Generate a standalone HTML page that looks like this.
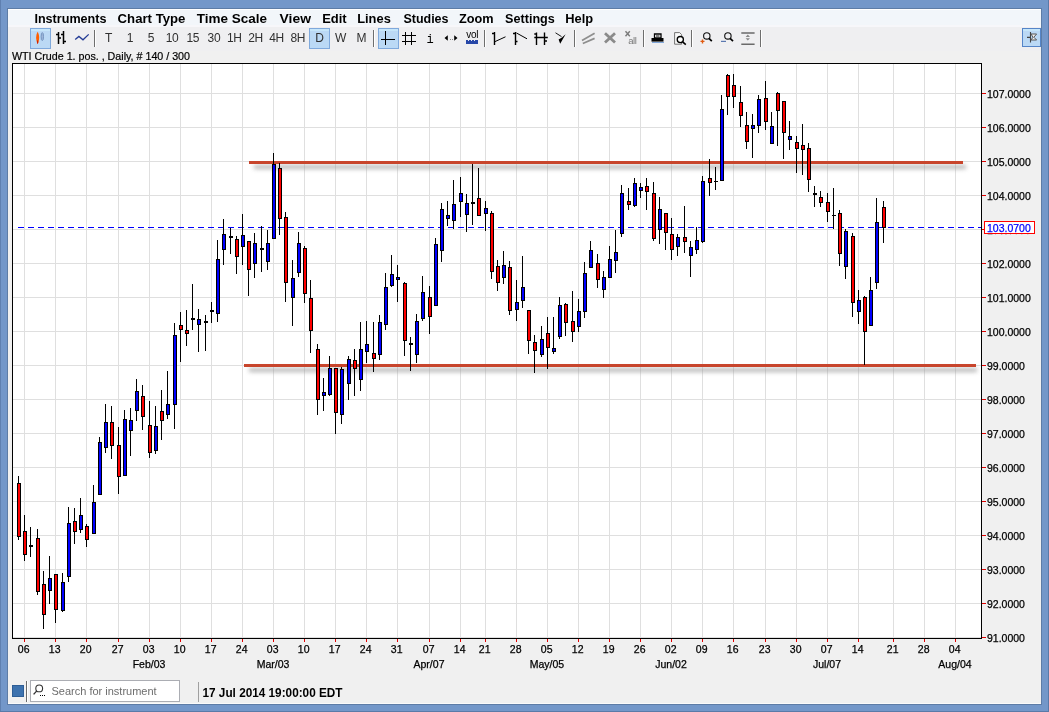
<!DOCTYPE html>
<html><head><meta charset="utf-8"><style>
html,body{margin:0;padding:0;width:1049px;height:712px;overflow:hidden;background:#7397C9;}
svg{position:absolute;left:0;top:0;display:block;will-change:transform;}
</style></head><body>
<svg width="1049" height="712" viewBox="0 0 1049 712" shape-rendering="crispEdges">
<rect x="0" y="0" width="1049" height="712" fill="#7397C9"/>
<rect x="0" y="0" width="1" height="712" fill="#5F80B0"/><rect x="1048" y="0" width="1" height="712" fill="#5A7AA8"/><rect x="0" y="711" width="1049" height="1" fill="#5A7AA8"/>
<rect x="7" y="8" width="1035" height="697" fill="#5D7CA6"/>
<rect x="8" y="9" width="1033" height="695" fill="#F0F0F0"/>
<rect x="8" y="703" width="1033" height="1" fill="#FAFAFA"/>
<rect x="8" y="9" width="1033" height="1" fill="#FFFFFF"/>
<rect x="8" y="10" width="1033" height="15" fill="#F2F6FA"/>
<rect x="8" y="25" width="1033" height="2" fill="#F7F7FA"/>
<rect x="8" y="27" width="1033" height="24" fill="#EFEFF1"/>
<rect x="12" y="63" width="969" height="575" fill="#FFFFFF"/>
<path d="M13 93.5H981M13 127.5H981M13 161.5H981M13 195.5H981M13 229.5H981M13 263.5H981M13 297.5H981M13 331.5H981M13 365.5H981M13 399.5H981M13 433.5H981M13 467.5H981M13 501.5H981M13 535.5H981M13 569.5H981M13 603.5H981M13 637.5H981M24.5 64V638M55.5 64V638M86.5 64V638M118.5 64V638M149.5 64V638M180.5 64V638M211.5 64V638M242.5 64V638M273.5 64V638M304.5 64V638M335.5 64V638M366.5 64V638M397.5 64V638M429.5 64V638M460.5 64V638M485.5 64V638M516.5 64V638M547.5 64V638M578.5 64V638M609.5 64V638M640.5 64V638M671.5 64V638M702.5 64V638M733.5 64V638M765.5 64V638M796.5 64V638M827.5 64V638M858.5 64V638M893.5 64V638M924.5 64V638M955.5 64V638" stroke="#DFDFDF" stroke-width="1" fill="none"/>
<defs><filter id="sh" x="-5%" y="-200%" width="110%" height="500%"><feGaussianBlur stdDeviation="2"/></filter></defs>
<rect x="254" y="165" width="712" height="4" fill="#9A9A9A" opacity="0.7" filter="url(#sh)"/>
<rect x="249" y="161" width="714" height="3" fill="#C8452C"/>
<rect x="249" y="368" width="728" height="4" fill="#9A9A9A" opacity="0.7" filter="url(#sh)"/>
<rect x="244" y="364" width="732" height="3" fill="#C8452C"/>
<path d="M18 227.5H981" stroke="#0000FF" stroke-width="1" stroke-dasharray="6 4" fill="none"/>
<path d="M18.5 476V540M24.5 515V561M30.5 527V557M37.5 529V595M43.5 571V629M49.5 556V604M55.5 574V623M62.5 573V612M68.5 507V582M74.5 508V544M80.5 498V533M86.5 524V547M93.5 485V534M99.5 437V495M105.5 404V453M111.5 406V459M118.5 427V494M124.5 410V476M130.5 408V456M136.5 379V421M142.5 385V430M149.5 401V458M155.5 406V454M161.5 390V440M167.5 371V419M174.5 323V429M180.5 312V362M186.5 310V346M192.5 284V330M198.5 309V352M205.5 315V351M211.5 302V323M217.5 240V322M223.5 219V265M230.5 228V254M236.5 236V274M242.5 214V265M248.5 241V296M254.5 233V278M261.5 226V272M267.5 230V270M273.5 153V239M279.5 163V235M285.5 212V302M292.5 260V326M298.5 232V277M304.5 246V303M310.5 280V353M317.5 344V415M323.5 378V411M329.5 356V396M335.5 368V434M341.5 367V424M348.5 356V400M354.5 349V396M360.5 322V391M366.5 321V363M373.5 322V372M379.5 315V360M385.5 273V330M391.5 255V287M397.5 265V302M404.5 282V356M410.5 337V371M416.5 314V363M422.5 276V321M429.5 286V334M435.5 238V306M441.5 203V262M447.5 201V226M453.5 180V229M460.5 177V217M466.5 194V232M472.5 164V225M478.5 168V216M485.5 201V231M491.5 211V279M497.5 260V291M503.5 251V284M509.5 261V315M516.5 280V321M522.5 256V308M528.5 310V354M534.5 335V373M541.5 326V357M547.5 317V369M553.5 317V354M559.5 297V339M565.5 303V336M572.5 291V342M578.5 299V332M584.5 262V318M590.5 241V268M597.5 254V288M603.5 271V298M609.5 246V278M615.5 230V273M621.5 185V237M628.5 188V210M634.5 178V207M640.5 183V198M646.5 178V210M653.5 182V241M659.5 197V244M665.5 213V250M671.5 218V260M677.5 234V256M684.5 206V253M690.5 241V277M696.5 227V254M702.5 176V243M709.5 159V196M715.5 167V190M721.5 95V181M727.5 74V115M733.5 74V108M740.5 86V127M746.5 112V149M752.5 114V158M758.5 95V133M765.5 81V130M771.5 112V144M777.5 92V146M783.5 101V159M789.5 121V150M796.5 136V173M802.5 124V175M808.5 143V192M814.5 186V207M820.5 191V207M827.5 193V222M833.5 188V229M839.5 210V266M845.5 229V279M852.5 233V317M858.5 290V324M864.5 296V365M870.5 277V326M876.5 198V289M883.5 201V243" stroke="#000" stroke-width="1" fill="none"/>
<rect x="17" y="483" width="4" height="54" fill="#000"/><rect x="18" y="484" width="2" height="52" fill="#FF0000"/><rect x="23" y="531" width="4" height="24" fill="#000"/><rect x="24" y="532" width="2" height="22" fill="#FF0000"/><rect x="29" y="545" width="4" height="2" fill="#000"/><rect x="36" y="538" width="4" height="54" fill="#000"/><rect x="37" y="539" width="2" height="52" fill="#FF0000"/><rect x="42" y="584" width="4" height="31" fill="#000"/><rect x="43" y="585" width="2" height="29" fill="#FF0000"/><rect x="48" y="578" width="4" height="13" fill="#000"/><rect x="49" y="579" width="2" height="11" fill="#0000FF"/><rect x="54" y="574" width="4" height="36" fill="#000"/><rect x="55" y="575" width="2" height="34" fill="#FF0000"/><rect x="61" y="582" width="4" height="29" fill="#000"/><rect x="62" y="583" width="2" height="27" fill="#0000FF"/><rect x="67" y="523" width="4" height="54" fill="#000"/><rect x="68" y="524" width="2" height="52" fill="#0000FF"/><rect x="73" y="521" width="4" height="11" fill="#000"/><rect x="74" y="522" width="2" height="9" fill="#FF0000"/><rect x="79" y="515" width="4" height="15" fill="#000"/><rect x="80" y="516" width="2" height="13" fill="#0000FF"/><rect x="85" y="526" width="4" height="14" fill="#000"/><rect x="86" y="527" width="2" height="12" fill="#FF0000"/><rect x="92" y="502" width="4" height="32" fill="#000"/><rect x="93" y="503" width="2" height="30" fill="#0000FF"/><rect x="98" y="442" width="4" height="53" fill="#000"/><rect x="99" y="443" width="2" height="51" fill="#0000FF"/><rect x="104" y="422" width="4" height="26" fill="#000"/><rect x="105" y="423" width="2" height="24" fill="#0000FF"/><rect x="110" y="422" width="4" height="24" fill="#000"/><rect x="111" y="423" width="2" height="22" fill="#FF0000"/><rect x="117" y="445" width="4" height="32" fill="#000"/><rect x="118" y="446" width="2" height="30" fill="#FF0000"/><rect x="123" y="419" width="4" height="57" fill="#000"/><rect x="124" y="420" width="2" height="55" fill="#0000FF"/><rect x="129" y="420" width="4" height="11" fill="#000"/><rect x="130" y="421" width="2" height="9" fill="#0000FF"/><rect x="135" y="391" width="4" height="20" fill="#000"/><rect x="136" y="392" width="2" height="18" fill="#0000FF"/><rect x="141" y="396" width="4" height="21" fill="#000"/><rect x="142" y="397" width="2" height="19" fill="#FF0000"/><rect x="148" y="425" width="4" height="28" fill="#000"/><rect x="149" y="426" width="2" height="26" fill="#FF0000"/><rect x="154" y="426" width="4" height="25" fill="#000"/><rect x="155" y="427" width="2" height="23" fill="#0000FF"/><rect x="160" y="411" width="4" height="10" fill="#000"/><rect x="161" y="412" width="2" height="8" fill="#FF0000"/><rect x="166" y="404" width="4" height="11" fill="#000"/><rect x="167" y="405" width="2" height="9" fill="#0000FF"/><rect x="173" y="335" width="4" height="70" fill="#000"/><rect x="174" y="336" width="2" height="68" fill="#0000FF"/><rect x="179" y="325" width="4" height="5" fill="#000"/><rect x="180" y="326" width="2" height="3" fill="#FF0000"/><rect x="185" y="330" width="4" height="4" fill="#000"/><rect x="186" y="331" width="2" height="2" fill="#FF0000"/><rect x="191" y="318" width="4" height="2" fill="#000"/><rect x="197" y="319" width="4" height="6" fill="#000"/><rect x="198" y="320" width="2" height="4" fill="#0000FF"/><rect x="204" y="321" width="4" height="2" fill="#000"/><rect x="210" y="310" width="4" height="2" fill="#000"/><rect x="216" y="259" width="4" height="55" fill="#000"/><rect x="217" y="260" width="2" height="53" fill="#0000FF"/><rect x="222" y="234" width="4" height="16" fill="#000"/><rect x="223" y="235" width="2" height="14" fill="#0000FF"/><rect x="229" y="236" width="4" height="2" fill="#000"/><rect x="235" y="239" width="4" height="18" fill="#000"/><rect x="236" y="240" width="2" height="16" fill="#FF0000"/><rect x="241" y="235" width="4" height="12" fill="#000"/><rect x="242" y="236" width="2" height="10" fill="#0000FF"/><rect x="247" y="241" width="4" height="29" fill="#000"/><rect x="248" y="242" width="2" height="27" fill="#FF0000"/><rect x="253" y="243" width="4" height="21" fill="#000"/><rect x="254" y="244" width="2" height="19" fill="#0000FF"/><rect x="260" y="248" width="4" height="2" fill="#000"/><rect x="266" y="243" width="4" height="19" fill="#000"/><rect x="267" y="244" width="2" height="17" fill="#0000FF"/><rect x="272" y="164" width="4" height="75" fill="#000"/><rect x="273" y="165" width="2" height="73" fill="#0000FF"/><rect x="278" y="168" width="4" height="51" fill="#000"/><rect x="279" y="169" width="2" height="49" fill="#FF0000"/><rect x="284" y="217" width="4" height="66" fill="#000"/><rect x="285" y="218" width="2" height="64" fill="#FF0000"/><rect x="291" y="278" width="4" height="20" fill="#000"/><rect x="292" y="279" width="2" height="18" fill="#0000FF"/><rect x="297" y="243" width="4" height="30" fill="#000"/><rect x="298" y="244" width="2" height="28" fill="#0000FF"/><rect x="303" y="248" width="4" height="46" fill="#000"/><rect x="304" y="249" width="2" height="44" fill="#FF0000"/><rect x="309" y="298" width="4" height="33" fill="#000"/><rect x="310" y="299" width="2" height="31" fill="#FF0000"/><rect x="316" y="349" width="4" height="51" fill="#000"/><rect x="317" y="350" width="2" height="49" fill="#FF0000"/><rect x="322" y="392" width="4" height="4" fill="#000"/><rect x="323" y="393" width="2" height="2" fill="#0000FF"/><rect x="328" y="368" width="4" height="27" fill="#000"/><rect x="329" y="369" width="2" height="25" fill="#0000FF"/><rect x="334" y="368" width="4" height="45" fill="#000"/><rect x="335" y="369" width="2" height="43" fill="#FF0000"/><rect x="340" y="369" width="4" height="46" fill="#000"/><rect x="341" y="370" width="2" height="44" fill="#0000FF"/><rect x="347" y="359" width="4" height="25" fill="#000"/><rect x="348" y="360" width="2" height="23" fill="#0000FF"/><rect x="353" y="360" width="4" height="9" fill="#000"/><rect x="354" y="361" width="2" height="7" fill="#FF0000"/><rect x="359" y="349" width="4" height="31" fill="#000"/><rect x="360" y="350" width="2" height="29" fill="#0000FF"/><rect x="365" y="344" width="4" height="8" fill="#000"/><rect x="366" y="345" width="2" height="6" fill="#0000FF"/><rect x="372" y="353" width="4" height="6" fill="#000"/><rect x="373" y="354" width="2" height="4" fill="#FF0000"/><rect x="378" y="322" width="4" height="33" fill="#000"/><rect x="379" y="323" width="2" height="31" fill="#0000FF"/><rect x="384" y="287" width="4" height="38" fill="#000"/><rect x="385" y="288" width="2" height="36" fill="#0000FF"/><rect x="390" y="274" width="4" height="12" fill="#000"/><rect x="391" y="275" width="2" height="10" fill="#0000FF"/><rect x="396" y="277" width="4" height="3" fill="#000"/><rect x="397" y="278" width="2" height="1" fill="#0000FF"/><rect x="403" y="283" width="4" height="58" fill="#000"/><rect x="404" y="284" width="2" height="56" fill="#FF0000"/><rect x="409" y="343" width="4" height="2" fill="#000"/><rect x="415" y="321" width="4" height="34" fill="#000"/><rect x="416" y="322" width="2" height="32" fill="#0000FF"/><rect x="421" y="292" width="4" height="27" fill="#000"/><rect x="422" y="293" width="2" height="25" fill="#0000FF"/><rect x="428" y="297" width="4" height="20" fill="#000"/><rect x="429" y="298" width="2" height="18" fill="#FF0000"/><rect x="434" y="244" width="4" height="62" fill="#000"/><rect x="435" y="245" width="2" height="60" fill="#0000FF"/><rect x="440" y="209" width="4" height="42" fill="#000"/><rect x="441" y="210" width="2" height="40" fill="#0000FF"/><rect x="446" y="215" width="4" height="4" fill="#000"/><rect x="447" y="216" width="2" height="2" fill="#0000FF"/><rect x="452" y="204" width="4" height="17" fill="#000"/><rect x="453" y="205" width="2" height="15" fill="#0000FF"/><rect x="459" y="193" width="4" height="9" fill="#000"/><rect x="460" y="194" width="2" height="7" fill="#0000FF"/><rect x="465" y="203" width="4" height="12" fill="#000"/><rect x="466" y="204" width="2" height="10" fill="#0000FF"/><rect x="471" y="202" width="4" height="2" fill="#000"/><rect x="477" y="198" width="4" height="18" fill="#000"/><rect x="478" y="199" width="2" height="16" fill="#FF0000"/><rect x="484" y="208" width="4" height="6" fill="#000"/><rect x="485" y="209" width="2" height="4" fill="#0000FF"/><rect x="490" y="213" width="4" height="59" fill="#000"/><rect x="491" y="214" width="2" height="57" fill="#FF0000"/><rect x="496" y="266" width="4" height="17" fill="#000"/><rect x="497" y="267" width="2" height="15" fill="#FF0000"/><rect x="502" y="265" width="4" height="13" fill="#000"/><rect x="503" y="266" width="2" height="11" fill="#0000FF"/><rect x="508" y="267" width="4" height="44" fill="#000"/><rect x="509" y="268" width="2" height="42" fill="#FF0000"/><rect x="515" y="302" width="4" height="8" fill="#000"/><rect x="516" y="303" width="2" height="6" fill="#0000FF"/><rect x="521" y="287" width="4" height="14" fill="#000"/><rect x="522" y="288" width="2" height="12" fill="#0000FF"/><rect x="527" y="310" width="4" height="31" fill="#000"/><rect x="528" y="311" width="2" height="29" fill="#FF0000"/><rect x="533" y="342" width="4" height="9" fill="#000"/><rect x="534" y="343" width="2" height="7" fill="#FF0000"/><rect x="540" y="339" width="4" height="16" fill="#000"/><rect x="541" y="340" width="2" height="14" fill="#0000FF"/><rect x="546" y="333" width="4" height="15" fill="#000"/><rect x="547" y="334" width="2" height="13" fill="#FF0000"/><rect x="552" y="348" width="4" height="4" fill="#000"/><rect x="553" y="349" width="2" height="2" fill="#0000FF"/><rect x="558" y="305" width="4" height="32" fill="#000"/><rect x="559" y="306" width="2" height="30" fill="#0000FF"/><rect x="564" y="304" width="4" height="19" fill="#000"/><rect x="565" y="305" width="2" height="17" fill="#FF0000"/><rect x="571" y="321" width="4" height="11" fill="#000"/><rect x="572" y="322" width="2" height="9" fill="#FF0000"/><rect x="577" y="311" width="4" height="16" fill="#000"/><rect x="578" y="312" width="2" height="14" fill="#0000FF"/><rect x="583" y="273" width="4" height="39" fill="#000"/><rect x="584" y="274" width="2" height="37" fill="#0000FF"/><rect x="589" y="250" width="4" height="18" fill="#000"/><rect x="590" y="251" width="2" height="16" fill="#0000FF"/><rect x="596" y="263" width="4" height="17" fill="#000"/><rect x="597" y="264" width="2" height="15" fill="#FF0000"/><rect x="602" y="277" width="4" height="13" fill="#000"/><rect x="603" y="278" width="2" height="11" fill="#0000FF"/><rect x="608" y="259" width="4" height="19" fill="#000"/><rect x="609" y="260" width="2" height="17" fill="#0000FF"/><rect x="614" y="252" width="4" height="9" fill="#000"/><rect x="615" y="253" width="2" height="7" fill="#0000FF"/><rect x="620" y="193" width="4" height="41" fill="#000"/><rect x="621" y="194" width="2" height="39" fill="#0000FF"/><rect x="627" y="201" width="4" height="4" fill="#000"/><rect x="628" y="202" width="2" height="2" fill="#FF0000"/><rect x="633" y="183" width="4" height="23" fill="#000"/><rect x="634" y="184" width="2" height="21" fill="#0000FF"/><rect x="639" y="187" width="4" height="4" fill="#000"/><rect x="640" y="188" width="2" height="2" fill="#0000FF"/><rect x="645" y="186" width="4" height="6" fill="#000"/><rect x="646" y="187" width="2" height="4" fill="#FF0000"/><rect x="652" y="193" width="4" height="46" fill="#000"/><rect x="653" y="194" width="2" height="44" fill="#FF0000"/><rect x="658" y="209" width="4" height="21" fill="#000"/><rect x="659" y="210" width="2" height="19" fill="#0000FF"/><rect x="664" y="213" width="4" height="20" fill="#000"/><rect x="665" y="214" width="2" height="18" fill="#FF0000"/><rect x="670" y="234" width="4" height="16" fill="#000"/><rect x="671" y="235" width="2" height="14" fill="#FF0000"/><rect x="676" y="237" width="4" height="10" fill="#000"/><rect x="677" y="238" width="2" height="8" fill="#0000FF"/><rect x="683" y="237" width="4" height="5" fill="#000"/><rect x="684" y="238" width="2" height="3" fill="#FF0000"/><rect x="689" y="247" width="4" height="9" fill="#000"/><rect x="690" y="248" width="2" height="7" fill="#0000FF"/><rect x="695" y="240" width="4" height="10" fill="#000"/><rect x="696" y="241" width="2" height="8" fill="#0000FF"/><rect x="701" y="181" width="4" height="61" fill="#000"/><rect x="702" y="182" width="2" height="59" fill="#0000FF"/><rect x="708" y="178" width="4" height="5" fill="#000"/><rect x="709" y="179" width="2" height="3" fill="#FF0000"/><rect x="714" y="181" width="4" height="1" fill="#000"/><rect x="720" y="109" width="4" height="72" fill="#000"/><rect x="721" y="110" width="2" height="70" fill="#0000FF"/><rect x="726" y="75" width="4" height="22" fill="#000"/><rect x="727" y="76" width="2" height="20" fill="#FF0000"/><rect x="732" y="85" width="4" height="12" fill="#000"/><rect x="733" y="86" width="2" height="10" fill="#FF0000"/><rect x="739" y="102" width="4" height="14" fill="#000"/><rect x="740" y="103" width="2" height="12" fill="#FF0000"/><rect x="745" y="125" width="4" height="17" fill="#000"/><rect x="746" y="126" width="2" height="15" fill="#FF0000"/><rect x="751" y="125" width="4" height="4" fill="#000"/><rect x="752" y="126" width="2" height="2" fill="#0000FF"/><rect x="757" y="99" width="4" height="27" fill="#000"/><rect x="758" y="100" width="2" height="25" fill="#0000FF"/><rect x="764" y="98" width="4" height="24" fill="#000"/><rect x="765" y="99" width="2" height="22" fill="#FF0000"/><rect x="770" y="126" width="4" height="18" fill="#000"/><rect x="771" y="127" width="2" height="16" fill="#0000FF"/><rect x="776" y="93" width="4" height="18" fill="#000"/><rect x="777" y="94" width="2" height="16" fill="#FF0000"/><rect x="782" y="101" width="4" height="32" fill="#000"/><rect x="783" y="102" width="2" height="30" fill="#FF0000"/><rect x="788" y="136" width="4" height="4" fill="#000"/><rect x="789" y="137" width="2" height="2" fill="#0000FF"/><rect x="795" y="142" width="4" height="7" fill="#000"/><rect x="796" y="143" width="2" height="5" fill="#FF0000"/><rect x="801" y="145" width="4" height="5" fill="#000"/><rect x="802" y="146" width="2" height="3" fill="#FF0000"/><rect x="807" y="148" width="4" height="32" fill="#000"/><rect x="808" y="149" width="2" height="30" fill="#FF0000"/><rect x="813" y="193" width="4" height="2" fill="#000"/><rect x="819" y="197" width="4" height="6" fill="#000"/><rect x="820" y="198" width="2" height="4" fill="#FF0000"/><rect x="826" y="202" width="4" height="10" fill="#000"/><rect x="827" y="203" width="2" height="8" fill="#FF0000"/><rect x="832" y="215" width="4" height="1" fill="#000"/><rect x="838" y="213" width="4" height="41" fill="#000"/><rect x="839" y="214" width="2" height="39" fill="#FF0000"/><rect x="844" y="231" width="4" height="36" fill="#000"/><rect x="845" y="232" width="2" height="34" fill="#0000FF"/><rect x="851" y="236" width="4" height="67" fill="#000"/><rect x="852" y="237" width="2" height="65" fill="#FF0000"/><rect x="857" y="300" width="4" height="12" fill="#000"/><rect x="858" y="301" width="2" height="10" fill="#0000FF"/><rect x="863" y="297" width="4" height="35" fill="#000"/><rect x="864" y="298" width="2" height="33" fill="#FF0000"/><rect x="869" y="290" width="4" height="36" fill="#000"/><rect x="870" y="291" width="2" height="34" fill="#0000FF"/><rect x="875" y="222" width="4" height="61" fill="#000"/><rect x="876" y="223" width="2" height="59" fill="#0000FF"/><rect x="882" y="207" width="4" height="21" fill="#000"/><rect x="883" y="208" width="2" height="19" fill="#FF0000"/>
<rect x="12.5" y="63.5" width="969" height="575" fill="none" stroke="#000" stroke-width="1"/>
<path d="M982 93.5H986M982 127.5H986M982 161.5H986M982 195.5H986M982 229.5H986M982 263.5H986M982 297.5H986M982 331.5H986M982 365.5H986M982 399.5H986M982 433.5H986M982 467.5H986M982 501.5H986M982 535.5H986M982 569.5H986M982 603.5H986M982 637.5H986" stroke="#E00000" stroke-width="1"/>
<g font-family='"Liberation Sans", sans-serif' font-size="10.5" fill="#000" stroke="#000" stroke-width="0.25"><text x="987" y="97.6">107.0000</text><text x="987" y="131.6">106.0000</text><text x="987" y="165.6">105.0000</text><text x="987" y="199.6">104.0000</text><text x="987" y="233.6">103.0000</text><text x="987" y="267.6">102.0000</text><text x="987" y="301.6">101.0000</text><text x="987" y="335.6">100.0000</text><text x="987" y="369.6">99.0000</text><text x="987" y="403.6">98.0000</text><text x="987" y="437.6">97.0000</text><text x="987" y="471.6">96.0000</text><text x="987" y="505.6">95.0000</text><text x="987" y="539.6">94.0000</text><text x="987" y="573.6">93.0000</text><text x="987" y="607.6">92.0000</text><text x="987" y="641.6">91.0000</text></g>
<rect x="984.5" y="221.5" width="50" height="12" fill="#FFF" stroke="#FF0000" stroke-width="1"/>
<text x="987" y="232" font-family='"Liberation Sans", sans-serif' font-size="10.5" fill="#0000FF" stroke="#0000FF" stroke-width="0.25">103.0700</text>
<path d="M24.5 639V642M55.5 639V642M86.5 639V642M118.5 639V642M149.5 639V642M180.5 639V642M211.5 639V642M242.5 639V642M273.5 639V642M304.5 639V642M335.5 639V642M366.5 639V642M397.5 639V642M429.5 639V642M460.5 639V642M485.5 639V642M516.5 639V642M547.5 639V642M578.5 639V642M609.5 639V642M640.5 639V642M671.5 639V642M702.5 639V642M733.5 639V642M765.5 639V642M796.5 639V642M827.5 639V642M858.5 639V642M893.5 639V642M924.5 639V642M955.5 639V642" stroke="#E00000" stroke-width="1"/>
<g font-family='"Liberation Sans", sans-serif' font-size="10.5" fill="#000" stroke="#000" stroke-width="0.25" text-anchor="middle"><text x="23.7" y="653">06</text><text x="54.7" y="653">13</text><text x="85.7" y="653">20</text><text x="117.7" y="653">27</text><text x="148.7" y="653">03</text><text x="179.7" y="653">10</text><text x="210.7" y="653">17</text><text x="241.7" y="653">24</text><text x="272.7" y="653">03</text><text x="303.7" y="653">10</text><text x="334.7" y="653">17</text><text x="365.7" y="653">24</text><text x="396.7" y="653">31</text><text x="428.7" y="653">07</text><text x="459.7" y="653">14</text><text x="484.7" y="653">21</text><text x="515.7" y="653">28</text><text x="546.7" y="653">05</text><text x="577.7" y="653">12</text><text x="608.7" y="653">19</text><text x="639.7" y="653">26</text><text x="670.7" y="653">02</text><text x="701.7" y="653">09</text><text x="732.7" y="653">16</text><text x="764.7" y="653">23</text><text x="795.7" y="653">30</text><text x="826.7" y="653">07</text><text x="857.7" y="653">14</text><text x="892.7" y="653">21</text><text x="923.7" y="653">28</text><text x="954.7" y="653">04</text><text x="149" y="668">Feb/03</text><text x="273" y="668">Mar/03</text><text x="429" y="668">Apr/07</text><text x="547" y="668">May/05</text><text x="671" y="668">Jun/02</text><text x="827" y="668">Jul/07</text><text x="955" y="668">Aug/04</text></g>
<text x="12" y="60" font-family='"Liberation Sans", sans-serif' font-size="10.7" fill="#000" stroke="#000" stroke-width="0.2">WTI Crude 1. pos. , Daily, # 140 / 300</text>
<g font-family='"Liberation Sans", sans-serif' font-size="13.4" font-weight="bold" fill="#000"><text x="34.4" y="23" textLength="72.1" lengthAdjust="spacingAndGlyphs">Instruments</text><text x="117.6" y="23" textLength="67.8" lengthAdjust="spacingAndGlyphs">Chart Type</text><text x="196.8" y="23" textLength="70.2" lengthAdjust="spacingAndGlyphs">Time Scale</text><text x="279.6" y="23" textLength="31.4" lengthAdjust="spacingAndGlyphs">View</text><text x="322.2" y="23" textLength="24.5" lengthAdjust="spacingAndGlyphs">Edit</text><text x="357.2" y="23" textLength="33.6" lengthAdjust="spacingAndGlyphs">Lines</text><text x="403.4" y="23" textLength="45.1" lengthAdjust="spacingAndGlyphs">Studies</text><text x="459" y="23" textLength="34.6" lengthAdjust="spacingAndGlyphs">Zoom</text><text x="505.1" y="23" textLength="49.7" lengthAdjust="spacingAndGlyphs">Settings</text><text x="565.3" y="23" textLength="27.9" lengthAdjust="spacingAndGlyphs">Help</text></g>
<rect x="30" y="28" width="21" height="21" fill="#7FA9DC"/>
<rect x="31" y="29" width="19" height="19" fill="#BBD9F5"/>
<rect x="31" y="29" width="19" height="2" fill="#C6E6FA"/>
<rect x="309" y="28" width="21" height="21" fill="#7FA9DC"/>
<rect x="310" y="29" width="19" height="19" fill="#BBD9F5"/>
<rect x="310" y="29" width="19" height="2" fill="#C6E6FA"/>
<rect x="378" y="28" width="21" height="21" fill="#7FA9DC"/>
<rect x="379" y="29" width="19" height="19" fill="#BBD9F5"/>
<rect x="379" y="29" width="19" height="2" fill="#C6E6FA"/>
<rect x="1022" y="28" width="19" height="19" fill="#5585C8"/>
<rect x="1023" y="29" width="17" height="17" fill="#BBD9F5"/>
<rect x="1023" y="29" width="17" height="2" fill="#C6E6FA"/>
<rect x="94" y="30" width="1" height="17" fill="#6E6E6E"/><rect x="95" y="30" width="1" height="17" fill="#FFFFFF"/>
<rect x="373" y="30" width="1" height="17" fill="#6E6E6E"/><rect x="374" y="30" width="1" height="17" fill="#FFFFFF"/>
<rect x="484" y="30" width="1" height="17" fill="#6E6E6E"/><rect x="485" y="30" width="1" height="17" fill="#FFFFFF"/>
<rect x="574" y="30" width="1" height="17" fill="#6E6E6E"/><rect x="575" y="30" width="1" height="17" fill="#FFFFFF"/>
<rect x="643" y="30" width="1" height="17" fill="#6E6E6E"/><rect x="644" y="30" width="1" height="17" fill="#FFFFFF"/>
<rect x="691" y="30" width="1" height="17" fill="#6E6E6E"/><rect x="692" y="30" width="1" height="17" fill="#FFFFFF"/>
<rect x="760" y="30" width="1" height="17" fill="#6E6E6E"/><rect x="761" y="30" width="1" height="17" fill="#FFFFFF"/>
<g shape-rendering="geometricPrecision">
<path d="M37.6 31.8 C39.6 35 39.8 40 37.6 44 C35.6 40 35.6 35 37.6 31.8Z" fill="#FF5F00"/>
<path d="M37.6 40 C38.6 41.5 38.4 43 37.6 44 C36.8 43 36.6 41.5 37.6 40Z" fill="#D02000"/>
<ellipse cx="42.3" cy="36.6" rx="1.2" ry="4" fill="#9FB8DA" stroke="#6F8FBC" stroke-width="0.9"/>
<path d="M58.5 32V44M56 34.5H58.5M58.5 38H61M63.5 31V44M61 34.5H63.5M63.5 41.5H66" stroke="#000" stroke-width="1.5" fill="none"/>
<path d="M75.2 39.5L78.9 36.4L83 39.8L88.7 34.4" stroke="#243C96" stroke-width="1.3" fill="none"/>
</g>
<g font-family='"Liberation Sans", sans-serif' font-size="12" fill="#303030" text-anchor="middle" letter-spacing="-0.4"><text x="108.4" y="42.2">T</text><text x="130" y="42.2">1</text><text x="150.8" y="42.2">5</text><text x="172" y="42.2">10</text><text x="192.8" y="42.2">15</text><text x="213.9" y="42.2">30</text><text x="234.3" y="42.2">1H</text><text x="255.5" y="42.2">2H</text><text x="276.6" y="42.2">4H</text><text x="297.7" y="42.2">8H</text><text x="319.4" y="42.2">D</text><text x="340.4" y="42.2">W</text><text x="361.2" y="42.2">M</text></g>
<path d="M385.5 31V45M381 39.5H395" stroke="#000" stroke-width="1.4"/>
<path d="M405.5 32V45M411.5 32V45M402 35.5H416M402 41.5H416" stroke="#000" stroke-width="1.4"/>
<text x="430" y="43" font-family='"Liberation Mono", monospace' font-size="12" text-anchor="middle" fill="#000">i</text>
<g shape-rendering="geometricPrecision"><path d="M444.5 38L447.8 35.3V40.7Z M457.5 38L454.2 35.3V40.7Z" fill="#000"/></g><rect x="450" y="39" width="1" height="1" fill="#888"/><rect x="452" y="39" width="1" height="1" fill="#888"/>
<text x="472.2" y="37.6" font-family='"Liberation Sans", sans-serif' font-size="10" text-anchor="middle" fill="#000" letter-spacing="-0.3">vol</text>
<rect x="466" y="40" width="12" height="4" fill="#2747A8"/><rect x="468" y="40" width="1" height="1" fill="#E8E8F0"/><rect x="471" y="40" width="1" height="1" fill="#E8E8F0"/><rect x="474" y="40" width="1" height="1" fill="#E8E8F0"/>
<g shape-rendering="geometricPrecision">
<path d="M494.5 32V45M492 33.5H494.5" stroke="#000" stroke-width="1.4" fill="none"/><path d="M495 41.6L505.5 36.8" stroke="#000" stroke-width="1" fill="none"/>
<path d="M515.5 32V45M513 33.5H515.5M515.5 41.5H517.5" stroke="#000" stroke-width="1.4" fill="none"/><path d="M516.5 33L527 38.8" stroke="#000" stroke-width="1" fill="none"/>
<path d="M534.3 37.5H547.8M536.5 32.5V45M544.5 32.5V45M534.3 34H536.5M544.5 41H547" stroke="#000" stroke-width="1.4" fill="none"/>
<path d="M555.5 32.8L561.5 36.6" stroke="#000" stroke-width="0.9"/><path d="M565.6 34.2L560.2 43.8L558.6 39.6L562 37.5Z" fill="#000"/>
<path d="M582 40.6L594.6 33.2M582.8 43.5L594.6 38.4" stroke="#8E8E8E" stroke-width="1.7"/>
<path d="M605 33.3L615 42.5M615 33.3L605 42.5" stroke="#8A8A8A" stroke-width="2.8"/>
<path d="M625.5 31.3L629.8 36.3M629.8 31.3L625.5 36.3" stroke="#7A7A7A" stroke-width="1.4"/>
</g>
<text x="628.2" y="43.6" font-family='"Liberation Sans", sans-serif' font-size="9.5" fill="#7A7A7A" letter-spacing="-0.4">all</text>
<g shape-rendering="geometricPrecision">
<path d="M654.5 34h6.5v4h-6.5z" fill="#FFF" stroke="#000" stroke-width="1.3"/><path d="M651.5 38h12v3.6h-12z" fill="#000"/><rect x="652" y="42" width="12" height="1" fill="#7FA6DA"/><rect x="656" y="35.5" width="3.5" height="1" fill="#000"/>
<path d="M674.6 32.6h5l2 2v9.6h-7z" fill="#FAFAFA" stroke="#666" stroke-width="0.9"/><circle cx="680.3" cy="39.6" r="3.1" fill="#FFF" stroke="#000" stroke-width="1.3"/><path d="M682.6 41.9L685.8 44.6" stroke="#000" stroke-width="1.6"/>
<circle cx="706.8" cy="35.9" r="3.2" fill="none" stroke="#111" stroke-width="1.1"/><path d="M709 38.3L711.8 41.2" stroke="#000" stroke-width="1.7"/><path d="M700.5 41.4H704.5M702.5 39.4V43.4" stroke="#E05A10" stroke-width="1.4"/>
<circle cx="727.9" cy="35.9" r="3.2" fill="none" stroke="#111" stroke-width="1.1"/><path d="M730.1 38.3L733 41.2" stroke="#000" stroke-width="1.7"/><path d="M721 41.4H726" stroke="#5A78B0" stroke-width="1.2"/>
<path d="M741.3 32.9H754.6M741.3 44.2H754.6" stroke="#6A6A6A" stroke-width="1.5"/><path d="M747.8 34.5L745.6 37H750Z M747.8 40.6L745.6 38.2H750Z" fill="#888"/>
<path d="M1027 37.4H1030.3M1030.5 32.1V42.6" stroke="#444" stroke-width="1.1"/><path d="M1031 34L1036.6 34L1033.8 37.2L1036.6 40L1031 40L1033 37.2Z" fill="#F4F4F4" stroke="#555" stroke-width="1"/>
</g>
<rect x="12" y="685" width="12" height="12" fill="#2E5E96"/><rect x="13" y="686" width="10" height="10" fill="#3D72AE"/>
<rect x="26" y="681" width="1" height="21" fill="#6A6A6A"/><rect x="27" y="681" width="1" height="21" fill="#FFFFFF"/>
<rect x="30.5" y="680.5" width="149" height="21" fill="#FFFFFF" stroke="#ABADB3" stroke-width="1"/>
<g shape-rendering="geometricPrecision"><circle cx="39.2" cy="688.4" r="3.4" fill="none" stroke="#333" stroke-width="1.1"/><path d="M36.8 690.9L33.6 694.4" stroke="#333" stroke-width="1.4"/></g><rect x="40" y="695" width="1" height="1" fill="#000"/><rect x="42" y="695" width="1" height="1" fill="#000"/><rect x="44" y="695" width="1" height="1" fill="#000"/>
<text x="51.5" y="695" font-family='"Liberation Sans", sans-serif' font-size="11" fill="#6D6D6D">Search for instrument</text>
<rect x="198" y="682" width="1" height="20" fill="#A0A0A0"/>
<text x="202.5" y="696.5" font-family='"Liberation Sans", sans-serif' font-size="12" font-weight="bold" fill="#000" textLength="140" lengthAdjust="spacingAndGlyphs">17 Jul 2014 19:00:00 EDT</text>
</svg>
</body></html>
